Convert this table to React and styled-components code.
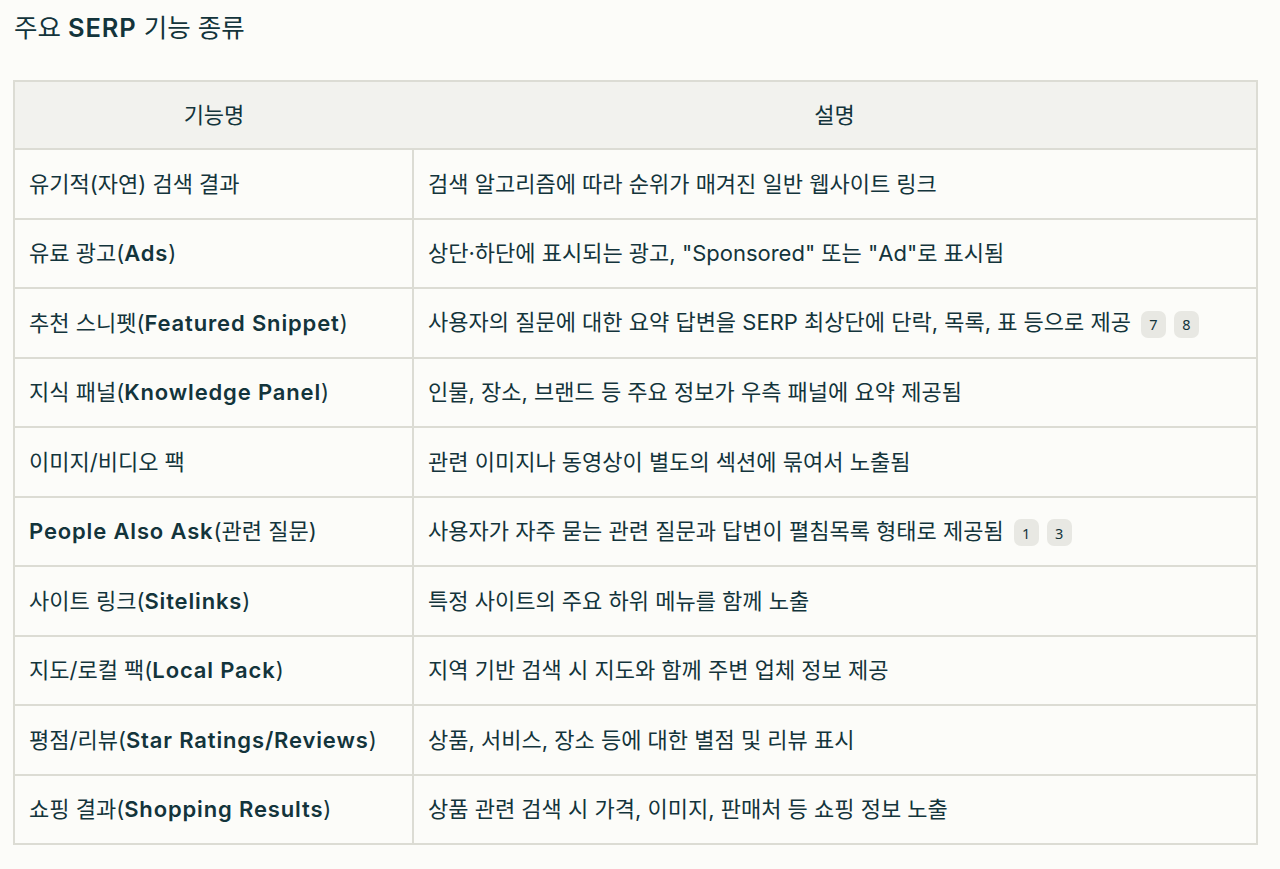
import styled, { createGlobalStyle } from 'styled-components'

const GlobalStyle = createGlobalStyle`
  html, body {
    margin: 0;
    background: #fcfcf9;
  }
  body {
    font-family: Inter, "Noto Sans CJK KR", sans-serif;
    color: #13343b;
  }
`

const rows = [
  ['유기적(자연) 검색 결과', '검색 알고리즘에 따라 순위가 매겨진 일반 웹사이트 링크'],
  ['유료 광고(Ads)', '상단·하단에 표시되는 광고, "Sponsored" 또는 "Ad"로 표시됨'],
  ['추천 스니펫(Featured Snippet)', '사용자의 질문에 대한 요약 답변을 SERP 최상단에 단락, 목록, 표 등으로 제공', ['7', '8']],
  ['지식 패널(Knowledge Panel)', '인물, 장소, 브랜드 등 주요 정보가 우측 패널에 요약 제공됨'],
  ['이미지/비디오 팩', '관련 이미지나 동영상이 별도의 섹션에 묶여서 노출됨'],
  ['People Also Ask(관련 질문)', '사용자가 자주 묻는 관련 질문과 답변이 펼침목록 형태로 제공됨', ['1', '3']],
  ['사이트 링크(Sitelinks)', '특정 사이트의 주요 하위 메뉴를 함께 노출'],
  ['지도/로컬 팩(Local Pack)', '지역 기반 검색 시 지도와 함께 주변 업체 정보 제공'],
  ['평점/리뷰(Star Ratings/Reviews)', '상품, 서비스, 장소 등에 대한 별점 및 리뷰 표시'],
  ['쇼핑 결과(Shopping Results)', '상품 관련 검색 시 가격, 이미지, 판매처 등 쇼핑 정보 노출'],
]

// latin runs render heavier and wider than the hangul around them
const Latin = styled.span`
  font-weight: 600;
  letter-spacing: 0.85px;
`

function Mixed({ text }) {
  return text.split(/([A-Za-z]+(?:[ /][A-Za-z]+)*)/).map((part, i) =>
    i % 2 ? <Latin key={i}>{part}</Latin> : part
  )
}

const Page = styled.div`
  padding: 13px 22px 24px 13px;
`

const Title = styled.h2`
  margin: 0 0 37px 1px;
  font-size: 25.5px;
  font-weight: 400;
  line-height: 30px;
`

const Table = styled.table`
  width: 1245px;
  border-collapse: collapse;
  border: 2px solid #dcdcd4;
  font-size: 22px;
`

const Head = styled.th`
  background: #f2f2ee;
  font-weight: 400;
  height: 62px;
  padding: 0 15px 4px;
  text-align: center;
  border-bottom: 2px solid #dcdcd4;
`

const Cell = styled.td`
  height: 63.5px;
  padding: 0 14px 4px;
  border: 2px solid #dcdcd4;
  vertical-align: middle;
  white-space: nowrap;
`

const Badge = styled.span`
  display: inline-flex;
  align-items: center;
  justify-content: center;
  width: 25px;
  height: 27px;
  margin-left: 8px;
  border-radius: 7px;
  background: #e8e8e3;
  font-family: "Noto Sans", sans-serif;
  font-size: 14.5px;
  &:first-child {
    margin-left: 0;
  }
`

const Badges = styled.span`
  margin-left: 10px;
  display: inline-flex;
  vertical-align: middle;
`

export default function App() {
  return (
    <Page>
      <GlobalStyle />
      <Title>
        <Mixed text="주요 SERP 기능 종류" />
      </Title>
      <Table>
        <colgroup>
          <col style={{ width: 399 }} />
          <col />
        </colgroup>
        <thead>
          <tr>
            <Head>기능명</Head>
            <Head>설명</Head>
          </tr>
        </thead>
        <tbody>
          {rows.map(([name, desc, refs]) => (
            <tr key={name}>
              <Cell>
                <Mixed text={name} />
              </Cell>
              <Cell>
                {desc}
                {refs && (
                  <Badges>
                    {refs.map((r) => (
                      <Badge key={r}>{r}</Badge>
                    ))}
                  </Badges>
                )}
              </Cell>
            </tr>
          ))}
        </tbody>
      </Table>
    </Page>
  )
}
